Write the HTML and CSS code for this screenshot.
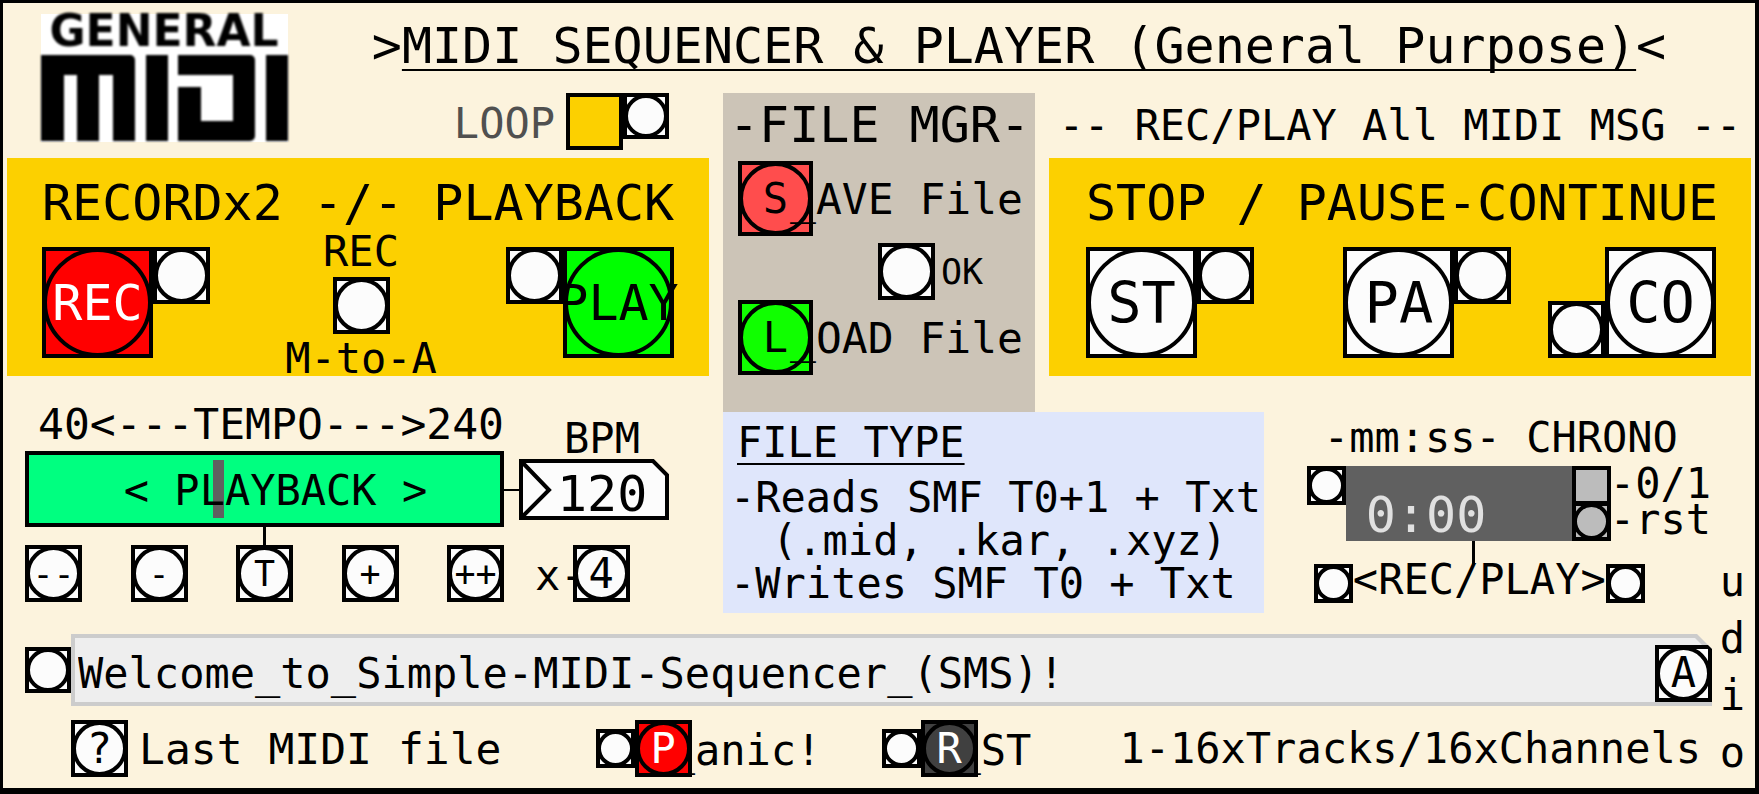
FILE: index.html
```html
<!DOCTYPE html>
<html lang="en">
<head>
  <meta charset="UTF-8">
  <title>MIDI Sequencer &amp; Player</title>
  <link rel="stylesheet" href="styles.css">
</head>
<body>

  <main class="sequencer">

    <!-- Logo -->
    <svg class="logo" viewBox="0 0 247 128" role="img" aria-label="General MIDI">
      <rect width="247" height="128" fill="#fff"/>
      <g class="logo-ink">
        <text x="123" y="32" text-anchor="middle">GENERAL</text>
        <rect x="0" y="41" width="90" height="20"/>
        <rect x="70" y="41" width="24" height="20" rx="5"/>
        <rect x="0" y="50" width="23" height="77"/>
        <rect x="36" y="50" width="22" height="77"/>
        <rect x="72" y="50" width="22" height="77"/>
        <rect x="105" y="41" width="22" height="86"/>
        <rect x="137" y="41" width="70" height="20"/>
        <rect x="192" y="41" width="22" height="86" rx="5"/>
        <rect x="137" y="107" width="70" height="20"/>
        <rect x="137" y="73" width="23" height="54"/>
        <rect x="225" y="41" width="22" height="86"/>
      </g>
    </svg>

    <h1 class="title">&gt;<span class="underlined">MIDI SEQUENCER &amp; PLAYER (General Purpose)</span>&lt;</h1>

    <!-- Loop switch -->
    <div class="loop">
      <label for="loop">LOOP</label>
      <div class="pair">
        <input type="checkbox" class="toggle" id="loop">
        <button class="bang small" aria-label="Loop light"></button>
      </div>
    </div>

    <p class="all-msg">-- REC/PLAY All MIDI MSG --</p>

    <!-- Record and playback -->
    <section class="panel record">
      <h2>RECORDx2 -/- PLAYBACK</h2>
      <div class="controls">
        <div class="pair">
          <button class="bang large red"><span>REC</span></button>
          <button class="bang" aria-label="Record light"></button>
        </div>
        <div class="manual">
          <span>REC</span>
          <button class="bang" aria-label="Record manual to auto"></button>
          <span>M-to-A</span>
        </div>
        <div class="pair">
          <button class="bang" aria-label="Play light"></button>
          <button class="bang large green"><span>PLAY</span></button>
        </div>
      </div>
    </section>

    <!-- Stop, pause, continue -->
    <section class="panel stop">
      <h2>STOP / PAUSE-CONTINUE</h2>
      <div class="controls">
        <div class="pair">
          <button class="bang large"><span>ST</span></button>
          <button class="bang" aria-label="Stop light"></button>
        </div>
        <div class="pair">
          <button class="bang large"><span>PA</span></button>
          <button class="bang" aria-label="Pause light"></button>
        </div>
        <div class="pair low">
          <button class="bang" aria-label="Continue light"></button>
          <button class="bang large"><span>CO</span></button>
        </div>
      </div>
    </section>

    <!-- File manager -->
    <section class="file-mgr">
      <h2>-FILE MGR-</h2>
      <div class="file-row">
        <button class="bang medium save" id="save"><span>S</span></button>
        <label for="save">_AVE File</label>
      </div>
      <div class="ok-row">
        <button class="bang" id="ok"></button>
        <label for="ok">OK</label>
      </div>
      <div class="file-row">
        <button class="bang medium load" id="load"><span>L</span></button>
        <label for="load">_OAD File</label>
      </div>
    </section>

    <section class="file-type">
      <h3 class="underlined">FILE TYPE</h3>
      <p>-Reads SMF T0+1 + Txt</p>
      <p class="indent">(.mid, .kar, .xyz)</p>
      <p>-Writes SMF T0 + Txt</p>
    </section>

    <!-- Tempo -->
    <section class="tempo">
      <div class="tempo-main">
        <label class="tempo-label" for="tempo">40&lt;---TEMPO---&gt;240</label>
        <div class="slider">
          <input type="range" id="tempo" min="40" max="240" value="120">
          <span>&lt; PLAYBACK &gt;</span>
        </div>
        <div class="stem"></div>
        <div class="tempo-buttons">
          <button class="bang tiny-text"><span>--</span></button>
          <button class="bang tiny-text"><span>-</span></button>
          <button class="bang tiny-text"><span>T</span></button>
          <button class="bang tiny-text"><span>+</span></button>
          <button class="bang tiny-text"><span>++</span></button>
        </div>
      </div>
      <div class="tempo-side">
        <label class="bpm-label" for="bpm">BPM</label>
        <div class="bpm-row">
          <div class="wire"></div>
          <div class="number-box">
            <svg viewBox="0 0 150 61" aria-hidden="true">
              <path d="M2 2H134L148 16V59H2Z" fill="#fcfcfc"/>
              <path d="M2 2L30 31L2 59" fill="none"/>
            </svg>
            <input type="text" id="bpm" value="120">
          </div>
        </div>
        <div class="times">
          <label for="times">x-</label>
          <button class="bang" id="times"><span>4</span></button>
        </div>
      </div>
    </section>

    <!-- Chronometer -->
    <section class="chrono">
      <h3>-mm:ss- CHRONO</h3>
      <div class="chrono-row">
        <button class="bang mini" aria-label="Chrono light"></button>
        <output class="display">0:00</output>
        <div class="switches">
          <input type="checkbox" class="toggle mini" id="run">
          <button class="bang mini gray" id="rst"></button>
        </div>
        <div class="switch-labels">
          <label for="run">-0/1</label>
          <label for="rst">-rst</label>
        </div>
      </div>
      <div class="chrono-stem"></div>
      <div class="source-row">
        <button class="bang mini" aria-label="Rec source"></button>
        <span>&lt;REC/PLAY&gt;</span>
        <button class="bang mini" aria-label="Play source"></button>
      </div>
    </section>

    <!-- Status line -->
    <div class="status">
      <button class="bang small" aria-label="Message light"></button>
      <div class="message">
        <div class="message-fill">
          <input type="text" aria-label="Message" value="Welcome_to_Simple-MIDI-Sequencer_(SMS)!">
        </div>
        <button class="bang"><span>A</span></button>
      </div>
    </div>

    <!-- Bottom line -->
    <footer class="bottom">
      <div class="last">
        <button class="bang" id="last"><span>?</span></button>
        <label for="last">Last MIDI file</label>
      </div>
      <div class="key">
        <button class="bang mini" aria-label="Panic light"></button>
        <button class="bang red over" id="panic"><span>P</span></button>
        <label for="panic">_anic!</label>
      </div>
      <div class="key">
        <button class="bang mini" aria-label="Reset light"></button>
        <button class="bang dark over" id="reset"><span>R</span></button>
        <label for="reset">_ST</label>
      </div>
      <p>1-16xTracks/16xChannels</p>
    </footer>

    <p class="audio">udio</p>

  </main>

</body>
</html>
```

FILE: styles.css
```css
* {
  box-sizing: border-box;
  margin: 0;
  padding: 0;
}

body {
  background: #000;
}

body, button, input {
  font-family: "DejaVu Sans Mono", monospace;
  font-size: 42px;
  line-height: 42px;
  color: #000;
}

h1, h2, h3 {
  font-weight: normal;
}

h1, h2 {
  font-size: 50px;
  line-height: 50px;
}

h3 {
  font-size: 42px;
}

label, p, h1, h2, h3, span {
  white-space: nowrap;
}

.underlined {
  text-decoration: underline;
  text-decoration-thickness: 2px;
  text-decoration-skip-ink: none;
  text-underline-offset: 6px;
}

.sequencer {
  display: grid;
  grid-template-columns: minmax(0, 9fr) minmax(0, 4fr) minmax(0, 9fr);
  grid-template-rows: minmax(90px, auto) minmax(65px, auto) auto 36px auto auto auto;
  column-gap: 14px;
  align-content: start;
  min-height: 100vh;
  padding: 0 4px 6px;
  border: solid #000;
  border-width: 3px 4px 6px 3px;
  background: #fcf3dd;
}

/* Bang buttons: a box with a ring in it */
.bang {
  display: grid;
  grid-template: minmax(0, 1fr) / minmax(0, 1fr);
  place-items: center;
  flex: none;
  width: 57px;
  height: 57px;
  border: 4px solid #000;
  background: #fcfcfc;
  cursor: pointer;
}

.bang::before {
  content: "";
  grid-area: 1 / 1;
  width: calc(100% - 2px);
  height: calc(100% - 2px);
  border: 4px solid #000;
  border-radius: 50%;
}

.bang span {
  grid-area: 1 / 1;
}

.bang.mini {
  width: 39px;
  height: 39px;
}

.bang.small {
  width: 46px;
  height: 46px;
}

.bang.medium {
  width: 75px;
  height: 75px;
}

.bang.large {
  width: 111px;
  height: 111px;
  font-size: 50px;
}

.stop .bang.large {
  font-size: 57px;
}

.bang.tiny-text {
  font-size: 35px;
}

.red {
  background: #f00;
  color: #fff;
}

.green {
  background: #0f0;
}

.save {
  background: #ff4d4d;
}

.load {
  background: #10ff00;
}

.dark {
  background: #404040;
  color: #fff;
}

.gray {
  background: #bcbcbc;
}

.toggle {
  appearance: none;
  flex: none;
  width: 57px;
  height: 57px;
  border: 4px solid #000;
  background: #fcd000;
}

.toggle.mini {
  width: 39px;
  height: 39px;
  background: #bcbcbc;
}

.pair {
  display: flex;
  align-items: flex-start;
}

.pair.low {
  align-items: flex-end;
}

/* Header */
.logo {
  grid-column: 1;
  grid-row: 1 / 3;
  width: 247px;
  height: 128px;
  margin: 11px 0 0 34px;
  overflow: visible;
}

.logo-ink {
  filter: blur(1px);
}

.logo text {
  font-family: "DejaVu Sans", sans-serif;
  font-size: 44px;
  font-weight: bold;
}

.title {
  grid-column: 1 / -1;
  grid-row: 1;
  padding: 18px 0 0 280px;
  text-align: center;
}

.loop {
  grid-column: 1;
  grid-row: 2;
  display: flex;
  justify-content: flex-end;
  align-items: flex-start;
  gap: 11px;
  margin-right: 40px;
}

.loop label {
  padding-top: 10px;
  color: #505050;
}

.all-msg {
  grid-column: 3;
  grid-row: 2;
  padding-top: 12px;
  text-align: center;
}

/* Yellow panels */
.panel {
  grid-row: 3;
  padding: 20px 35px 0;
  background: #fcd000;
}

.record {
  grid-column: 1;
}

.stop {
  grid-column: 3;
  padding-left: 37px;
}

.controls {
  display: flex;
  justify-content: space-between;
  height: 148px;
}

.controls .pair {
  height: 111px;
  margin-top: 19px;
}

.stop .controls {
  display: grid;
  grid-template-columns: 258fr 205fr 168fr;
}

.manual {
  display: flex;
  flex-direction: column;
  align-items: center;
  gap: 5px;
  padding: 4px 0 0 6px;
  line-height: 40px;
}

/* File manager */
.file-mgr {
  grid-column: 2;
  grid-row: 2 / 5;
  padding: 7px 0 0 15px;
  background: #ccc4b7;
}

.file-mgr h2 {
  margin: 0 0 11px -9px;
}

.file-row, .ok-row, .key {
  display: flex;
  align-items: center;
}

.file-row {
  font-size: 43px;
}

.file-row label {
  margin-left: -23px;
}

.ok-row {
  gap: 6px;
  margin: 7px 0 0 140px;
}

.ok-row label {
  font-size: 35px;
}

.file-type {
  grid-column: 2 / 4;
  grid-row: 5;
  justify-self: start;
  padding: 9px 3px 8px 7px;
  background: #dfe6fb;
  line-height: 43px;
}

.file-type h3 {
  margin: 0 0 12px 7px;
}

.file-type .indent {
  padding-left: 42px;
}

/* Tempo */
.tempo {
  grid-column: 1;
  grid-row: 4 / 6;
  display: flex;
  padding: 0 40px 0 18px;
}

.tempo-main {
  flex: 1;
  padding-top: 27px;
}

.tempo-label {
  display: block;
  margin-bottom: 5px;
  font-size: 43px;
  line-height: 43px;
  text-align: right;
}

.slider {
  position: relative;
  height: 76px;
  border: 4px solid #000;
  background: #00ff80;
}

.slider input {
  appearance: none;
  display: block;
  width: 100%;
  height: 100%;
  background: none;
}

.slider input::-webkit-slider-thumb {
  appearance: none;
  width: 11px;
  height: 58px;
  background: #606060;
}

.slider span {
  position: absolute;
  inset: 0;
  padding: 15px 0 0 22px;
  text-align: center;
  pointer-events: none;
}

.stem {
  width: 3px;
  height: 18px;
  margin: 0 auto;
  background: #000;
}

.tempo-buttons {
  display: flex;
  justify-content: space-between;
}

.tempo-side {
  padding-top: 42px;
}

.bpm-label {
  display: block;
  padding-left: 31px;
  line-height: 41px;
  text-align: center;
}

.bpm-row {
  display: flex;
  align-items: center;
}

.wire {
  width: 15px;
  height: 2px;
  background: #000;
}

.number-box {
  display: grid;
  width: 150px;
  height: 61px;
}

.number-box svg {
  grid-area: 1 / 1;
  stroke: #000;
  stroke-width: 4;
}

.number-box input {
  grid-area: 1 / 1;
  width: 100%;
  min-width: 0;
  padding: 6px 0 0 38px;
  border: 0;
  background: none;
  font-size: 50px;
  line-height: 50px;
}

.times {
  display: flex;
  align-items: center;
  margin: 25px 0 0 31px;
}

.times label {
  margin-right: -13px;
  padding-top: 4px;
}

/* Chronometer */
.chrono {
  grid-column: 3;
  grid-row: 4 / 6;
  justify-self: end;
  margin-right: 40px;
  padding-top: 41px;
}

.chrono h3 {
  margin: 0 0 7px 17px;
}

.chrono-row {
  display: flex;
  align-items: flex-start;
}

.display {
  width: 226px;
  height: 75px;
  padding: 24px 0 0 20px;
  background: #606060;
  color: #e0e0e0;
  font-size: 50px;
  line-height: 50px;
}

.switches {
  display: flex;
  flex-direction: column;
}

.switches .bang {
  margin-top: -3px;
}

.switch-labels {
  display: flex;
  flex-direction: column;
  margin-left: -1px;
  line-height: 36px;
}

.chrono-stem {
  width: 3px;
  height: 24px;
  margin: 0 0 -6px 165px;
  background: #000;
}

.source-row {
  display: flex;
  align-items: center;
  padding-left: 7px;
}

.source-row span {
  padding-bottom: 6px;
}

/* Status line */
.status {
  grid-column: 1 / -1;
  grid-row: 6;
  display: flex;
  align-items: center;
  margin: 21px 39px 0 18px;
}

.message {
  flex: 1;
  display: grid;
  align-items: center;
  height: 72px;
  padding: 4px;
  background: #ccc;
  clip-path: polygon(0 0, calc(100% - 15px) 0, 100% 15px, 100% 100%, 0 100%);
}

.message-fill {
  grid-area: 1 / 1;
  height: 64px;
  background: #eee;
  clip-path: polygon(0 0, calc(100% - 13px) 0, 100% 13px, 100% 100%, 0 100%);
}

.message input {
  width: 100%;
  height: 64px;
  padding: 6px 60px 0 3px;
  border: 0;
  background: none;
}

.message .bang {
  grid-area: 1 / 1;
  justify-self: end;
  z-index: 1;
  margin: 6px -4px 0 0;
}

/* Bottom line */
.bottom {
  grid-column: 1 / -1;
  grid-row: 7;
  display: grid;
  grid-template-columns: 525fr 286fr 238fr auto;
  align-items: center;
  margin: 14px 50px 4px 64px;
}

.last {
  display: flex;
  align-items: center;
  gap: 11px;
  font-size: 43px;
}

.key .over {
  z-index: 1;
}

.key label {
  margin-left: -22px;
  padding-top: 4px;
}

.audio {
  grid-column: 3;
  grid-row: 5 / 8;
  justify-self: end;
  align-self: end;
  width: 1ch;
  margin-right: 6px;
  line-height: 57px;
  white-space: normal;
  word-break: break-all;
}
```
